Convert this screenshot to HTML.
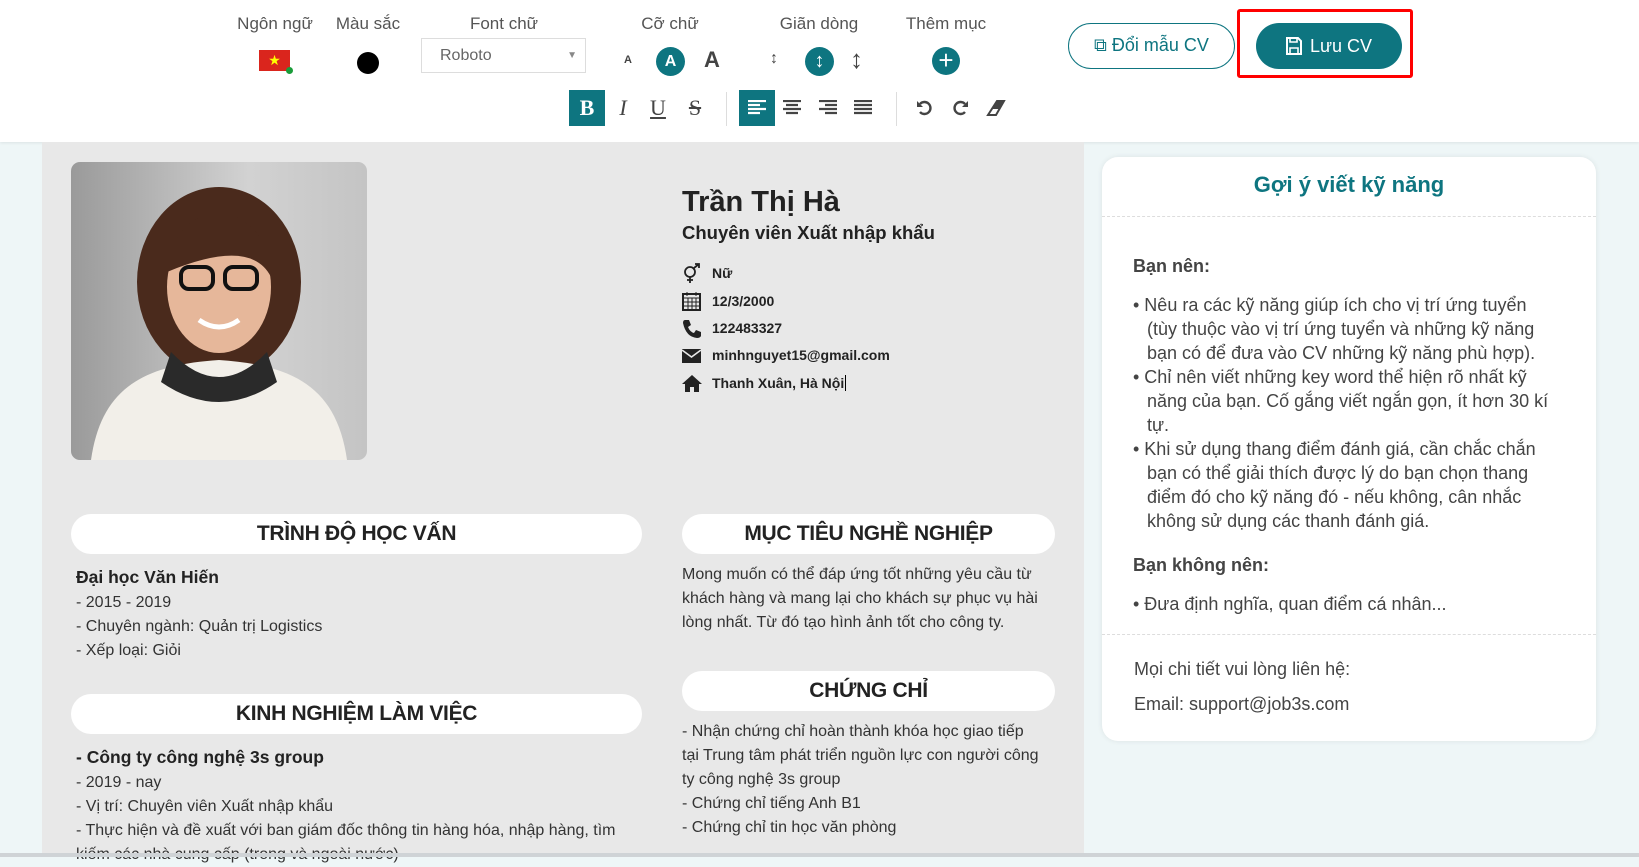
<!DOCTYPE html>
<html><head><meta charset="utf-8"><style>
*{box-sizing:border-box;margin:0;padding:0}
body{width:1639px;height:857px;overflow:hidden;background:#eef6f7;font-family:"Liberation Sans",sans-serif;position:relative;color:#333}
.abs{position:absolute}
#top{left:0;top:0;width:1639px;height:142px;background:#fff;box-shadow:0 1px 3px rgba(0,0,0,.08)}
.lbl{position:absolute;top:14px;font-size:17px;color:#555;transform:translateX(-50%);white-space:nowrap}
.teal{background:#0e7580}
.circ{position:absolute;border-radius:50%}
.tb{position:absolute;top:90px;width:36px;height:36px;display:flex;align-items:center;justify-content:center;font-size:22px;color:#444}
#paper{left:42px;top:142px;width:1042px;height:712px;background:#e8e8e8}
.pill{position:absolute;background:#fff;border-radius:20px;text-align:center;font-weight:bold;font-size:21px;color:#222;line-height:40px;letter-spacing:-.3px}
.txt{position:absolute;font-size:16px;line-height:24px;color:#333}
.ci{position:absolute;left:682px;width:20px;height:20px}
.ct{position:absolute;left:712px;font-size:14px;font-weight:bold;color:#222}
#side{left:1102px;top:157px;width:494px;height:584px;background:#fff;border-radius:16px;box-shadow:0 0 6px rgba(0,0,0,.08)}
.s{position:absolute;font-size:18px;color:#444;line-height:24px}
</style></head><body>
<div id="top" class="abs">
 <div class="lbl" style="left:275px">Ngôn ngữ</div>
 <div class="lbl" style="left:368px">Màu sắc</div>
 <div class="lbl" style="left:504px">Font chữ</div>
 <div class="lbl" style="left:670px">Cỡ chữ</div>
 <div class="lbl" style="left:819px">Giãn dòng</div>
 <div class="lbl" style="left:946px">Thêm mục</div>
 <div class="abs" style="left:259px;top:50px;width:31px;height:21px;background:#da251d;color:#ff0;font-size:14px;text-align:center;line-height:21px">★</div>
 <div class="circ" style="left:286px;top:67px;width:7px;height:7px;background:#1a9c3a"></div>
 <div class="circ" style="left:357px;top:52px;width:22px;height:22px;background:#000"></div>
 <div class="abs" style="left:421px;top:38px;width:165px;height:35px;border:1px solid #ddd;font-size:16px;color:#666;line-height:33px;padding-left:18px">Roboto<span style="position:absolute;right:8px;font-size:10px;color:#888">▼</span></div>
 <div class="abs" style="left:624px;top:54px;font-size:11px;font-weight:bold;color:#444">A</div>
 <div class="circ teal" style="left:656px;top:47px;width:29px;height:29px;color:#fff;font-weight:bold;font-size:16px;text-align:center;line-height:29px">A</div>
 <div class="abs" style="left:704px;top:47px;font-size:22px;font-weight:bold;color:#444">A</div>
 <div class="abs" style="left:770px;top:50px;font-size:16px;color:#444">↕</div>
 <div class="circ teal" style="left:805px;top:47px;width:29px;height:29px;color:#fff;font-size:20px;text-align:center;line-height:28px">↕</div>
 <div class="abs" style="left:850px;top:44px;font-size:26px;color:#444">↕</div>
 <div class="circ teal" style="left:932px;top:47px;width:28px;height:28px;color:#fff;font-size:26px;text-align:center;line-height:27px">+</div>
 <div class="tb teal" style="left:569px;color:#fff;font-family:'Liberation Serif',serif;font-weight:bold">B</div>
 <div class="tb" style="left:605px;font-family:'Liberation Serif',serif;font-style:italic">I</div>
 <div class="tb" style="left:640px;font-family:'Liberation Serif',serif;text-decoration:underline">U</div>
 <div class="tb" style="left:677px;font-family:'Liberation Serif',serif;text-decoration:line-through">S</div>
 <div class="abs" style="left:726px;top:92px;width:1px;height:34px;background:#ddd"></div>
 <div class="tb teal" style="left:739px"><svg width="18" height="16"><path d="M0 1h18M0 5h12M0 9h18M0 13h12" stroke="#fff" stroke-width="2.2"/></svg></div>
 <div class="tb" style="left:774px"><svg width="18" height="16"><path d="M0 1h18M3 5h12M0 9h18M3 13h12" stroke="#444" stroke-width="2.2"/></svg></div>
 <div class="tb" style="left:810px"><svg width="18" height="16"><path d="M0 1h18M6 5h12M0 9h18M6 13h12" stroke="#444" stroke-width="2.2"/></svg></div>
 <div class="tb" style="left:845px"><svg width="18" height="16"><path d="M0 1h18M0 5h18M0 9h18M0 13h18" stroke="#444" stroke-width="2.2"/></svg></div>
 <div class="abs" style="left:896px;top:92px;width:1px;height:34px;background:#ddd"></div>
 <div class="tb" style="left:907px"><svg width="18" height="18"><path d="M4 5a6 6 0 1 1 0 8" fill="none" stroke="#444" stroke-width="2.4"/><path d="M1 2v6h6z" fill="#444"/></svg></div>
 <div class="tb" style="left:942px"><svg width="18" height="18"><path d="M14 5a6 6 0 1 0 0 8" fill="none" stroke="#444" stroke-width="2.4"/><path d="M17 2v6h-6z" fill="#444"/></svg></div>
 <div class="tb" style="left:978px"><svg width="20" height="16"><path d="M11 1l7 0-8 14H2z" fill="none" stroke="#444" stroke-width="2"/><path d="M11 1h7l-5 8H6z" fill="#444"/></svg></div>
 <div class="abs" style="left:1068px;top:23px;width:167px;height:46px;border:1.5px solid #0e7580;border-radius:23px;font-size:18px;color:#0e7580;line-height:43px;text-align:center">⧉ Đổi mẫu CV</div>
 <div class="abs" style="left:1237px;top:9px;width:176px;height:69px;border:3px solid #f00;border-radius:3px"></div>
 <div class="abs teal" style="left:1256px;top:23px;width:146px;height:46px;border-radius:23px;font-size:18px;color:#fff;line-height:46px;text-align:center"><svg width="16" height="18" style="vertical-align:-3px;margin-right:8px"><path d="M1 1h11l3 3v13H1z" fill="none" stroke="#fff" stroke-width="2"/><path d="M4 1v4h7V1M4 17v-6h8v6" fill="none" stroke="#fff" stroke-width="1.6"/></svg>Lưu CV</div>
</div>
<div id="paper" class="abs"></div>
<div class="abs" style="left:71px;top:162px;width:296px;height:298px;border-radius:9px;overflow:hidden;background:linear-gradient(90deg,#9a9a9a,#d2d2d2 60%,#c4c4c4)">
 <svg width="296" height="298">
  <ellipse cx="148" cy="120" rx="82" ry="95" fill="#4a2a1c"/>
  <path d="M20 298c10-70 50-95 128-100 78 5 118 30 128 100z" fill="#f2efe9"/>
  <path d="M100 190q48 50 96 0l10 30q-58 40-116 0z" fill="#2a2a2a"/>
  <ellipse cx="148" cy="125" rx="52" ry="66" fill="#e6b79a"/>
  <path d="M96 110q10-70 70-55 35 20 34 60-20-40-104-5z" fill="#4a2a1c"/>
  <rect x="110" y="105" width="32" height="22" rx="8" fill="none" stroke="#111" stroke-width="4"/>
  <rect x="154" y="105" width="32" height="22" rx="8" fill="none" stroke="#111" stroke-width="4"/>
  <path d="M128 158q20 14 40 0" stroke="#fff" stroke-width="5" fill="none"/>
 </svg>
</div>
<div class="abs" style="left:682px;top:186px;font-size:29px;font-weight:bold;color:#222">Trần Thị Hà</div>
<div class="abs" style="left:682px;top:222px;font-size:18.5px;font-weight:bold;color:#222">Chuyên viên Xuất nhập khẩu</div>
<svg class="ci" style="top:263px"><circle cx="8" cy="9" r="5" fill="none" stroke="#222" stroke-width="1.8"/><path d="M8 14v6M5 17h6M12 5l5-4M13 1h4v4" fill="none" stroke="#222" stroke-width="1.8"/></svg>
<div class="ct" style="top:265px">Nữ</div>
<svg class="ci" style="top:291px"><rect x="1" y="3" width="17" height="16" fill="none" stroke="#222" stroke-width="2"/><path d="M1 7h17M5 1v4M14 1v4M1 11h17M1 15h17M6 7v12M10 7v12M14 7v12" stroke="#222" stroke-width="1"/></svg>
<div class="ct" style="top:293px">12/3/2000</div>
<svg class="ci" style="top:319px"><path d="M3 1l4 0 2 5-3 2q2 5 6 6l2-3 5 2v4q-1 2-4 2Q4 18 1 4q0-3 2-3z" fill="#222"/></svg>
<div class="ct" style="top:320px">122483327</div>
<svg class="ci" style="top:346px"><rect x="0" y="3" width="19" height="14" fill="#222"/><path d="M0 4l9.5 7L19 4" fill="none" stroke="#e8e8e8" stroke-width="1.6"/></svg>
<div class="ct" style="top:347px">minhnguyet15@gmail.com</div>
<svg class="ci" style="top:374px"><path d="M0 10L10 1l10 9h-3v8h-5v-5H8v5H3v-8z" fill="#222"/></svg>
<div class="ct" style="top:375px">Thanh Xuân, Hà Nội<span style="border-left:1.5px solid #000;margin-left:1px"></span></div>
<div class="pill" style="left:71px;top:514px;width:571px">TRÌNH ĐỘ HỌC VẤN</div>
<div class="pill" style="left:682px;top:514px;width:373px">MỤC TIÊU NGHỀ NGHIỆP</div>
<div class="pill" style="left:682px;top:671px;width:373px">CHỨNG CHỈ</div>
<div class="pill" style="left:71px;top:694px;width:571px">KINH NGHIỆM LÀM VIỆC</div>
<div class="txt" style="left:76px;top:565px"><b style="font-size:17.5px;color:#222">Đại học Văn Hiến</b><br>- 2015 - 2019<br>- Chuyên ngành: Quản trị Logistics<br>- Xếp loại: Giỏi</div>
<div class="txt" style="left:76px;top:745px"><b style="font-size:17.5px;color:#222">- Công ty công nghệ 3s group</b><br>- 2019 - nay<br>- Vị trí: Chuyên viên Xuất nhập khẩu<br>- Thực hiện và đề xuất với ban giám đốc thông tin hàng hóa, nhập hàng, tìm<br>kiếm các nhà cung cấp (trong và ngoài nước)</div>
<div class="txt" style="left:682px;top:563px;width:380px">Mong muốn có thể đáp ứng tốt những yêu cầu từ khách hàng và mang lại cho khách sự phục vụ hài lòng nhất. Từ đó tạo hình ảnh tốt cho công ty.</div>
<div class="txt" style="left:682px;top:720px;width:380px">- Nhận chứng chỉ hoàn thành khóa học giao tiếp<br>tại Trung tâm phát triển nguồn lực con người công<br>ty công nghệ 3s group<br>- Chứng chỉ tiếng Anh B1<br>- Chứng chỉ tin học văn phòng</div>
<div class="abs" style="left:0;top:853px;width:1639px;height:4px;background:#cfd3d6"></div>
<div id="side" class="abs">
 <div class="abs" style="left:0;width:494px;top:15px;text-align:center;font-size:22px;font-weight:bold;color:#0e7580">Gợi ý viết kỹ năng</div>
 <div class="abs" style="left:0;top:59px;width:494px;border-top:1px dashed #ddd"></div>
 <div class="s" style="left:31px;top:97px;font-weight:bold">Bạn nên:</div>
 <div class="s" style="left:31px;top:136px;width:440px">
  <div style="padding-left:14px;text-indent:-14px">• Nêu ra các kỹ năng giúp ích cho vị trí ứng tuyển<br>(tùy thuộc vào vị trí ứng tuyển và những kỹ năng<br>bạn có để đưa vào CV những kỹ năng phù hợp).</div>
  <div style="padding-left:14px;text-indent:-14px">• Chỉ nên viết những key word thể hiện rõ nhất kỹ<br>năng của bạn. Cố gắng viết ngắn gọn, ít hơn 30 kí<br>tự.</div>
  <div style="padding-left:14px;text-indent:-14px">• Khi sử dụng thang điểm đánh giá, cần chắc chắn<br>bạn có thể giải thích được lý do bạn chọn thang<br>điểm đó cho kỹ năng đó - nếu không, cân nhắc<br>không sử dụng các thanh đánh giá.</div>
 </div>
 <div class="s" style="left:31px;top:396px;font-weight:bold">Bạn không nên:</div>
 <div class="s" style="left:31px;top:435px">• Đưa định nghĩa, quan điểm cá nhân...</div>
 <div class="abs" style="left:0;top:477px;width:494px;border-top:1px dashed #ddd"></div>
 <div class="s" style="left:32px;top:500px">Mọi chi tiết vui lòng liên hệ:</div>
 <div class="s" style="left:32px;top:535px">Email: support@job3s.com</div>
</div>
</body></html>
